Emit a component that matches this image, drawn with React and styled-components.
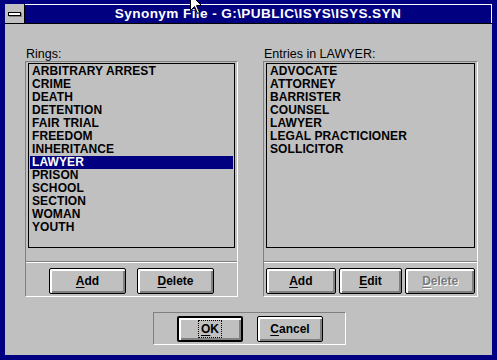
import React from 'react';
import styled, { createGlobalStyle } from 'styled-components';

const GlobalStyle = createGlobalStyle`
  html, body {
    margin: 0;
    padding: 0;
    background: #000080;
  }
  body {
    font-family: "Liberation Sans", Arial, sans-serif;
  }
`;

const rings = [
  'ARBITRARY ARREST',
  'CRIME',
  'DEATH',
  'DETENTION',
  'FAIR TRIAL',
  'FREEDOM',
  'INHERITANCE',
  'LAWYER',
  'PRISON',
  'SCHOOL',
  'SECTION',
  'WOMAN',
  'YOUTH',
];

const entries = [
  'ADVOCATE',
  'ATTORNEY',
  'BARRISTER',
  'COUNSEL',
  'LAWYER',
  'LEGAL PRACTICIONER',
  'SOLLICITOR',
];

const Window = styled.div`
  position: relative;
  width: 497px;
  height: 360px;
  box-sizing: border-box;
  padding: 4px 5px 5px 5px;
  background: #000080;
  display: flex;
  flex-direction: column;
  overflow: hidden;
`;

const TitleBar = styled.div`
  display: flex;
  height: 20px;
  box-sizing: border-box;
  border-bottom: 1px solid #000;
`;

const SysMenu = styled.div`
  width: 20px;
  box-sizing: border-box;
  background: #c0c0c0;
  border-right: 1px solid #000;
  display: flex;
  align-items: center;
  justify-content: center;
`;

const SysBar = styled.div`
  width: 11px;
  height: 2px;
  background: #fff;
  border: 1px solid #000;
  box-shadow: 1px 1px 0 #808080;
  margin-right: 1px;
`;

const Caption = styled.div`
  flex: 1;
  box-sizing: border-box;
  border-top: 1px solid #fff;
  border-right: 1px solid #fff;
  color: #fff;
  font-weight: 700;
  font-size: 13.6px;
  letter-spacing: 0.4px;
  line-height: 18px;
  text-align: center;
  white-space: nowrap;
`;

const Client = styled.div`
  flex: 1;
  background: #c0c0c0;
  padding: 23px 14px 10px 20px;
  display: flex;
  flex-direction: column;
`;

const Columns = styled.div`
  display: grid;
  grid-template-columns: 213px 215px;
  column-gap: 25px;
`;

const Column = styled.div`
  display: flex;
  flex-direction: column;
`;

const Label = styled.div`
  height: 14px;
  line-height: 14px;
  padding-left: 1px;
  font-size: 12.5px;
  color: #000;
  white-space: nowrap;
`;

const Group = styled.div`
  box-sizing: border-box;
  border: 1px solid;
  border-color: #808080 #fff #fff #808080;
`;

const ListGroup = styled(Group)`
  height: 236px;
  padding: 1px 2px 2px 2px;
  display: flex;
  flex-direction: column;
`;

const ListBox = styled.div`
  height: 185px;
  box-sizing: border-box;
  border: 1px solid #000;
  padding: 1px;
`;

const Item = styled.div`
  height: 13px;
  line-height: 13px;
  padding-left: 2px;
  font-size: 12px;
  font-weight: 700;
  letter-spacing: 0.1px;
  white-space: nowrap;
  color: ${({ $selected }) => ($selected ? '#fff' : '#000')};
  background: ${({ $selected }) => ($selected ? '#000080' : 'transparent')};
`;

const Divider = styled.div`
  margin: 13px -2px 0;
  border-top: 1px solid #808080;
  border-bottom: 1px solid #fff;
`;

const ButtonRow = styled.div`
  margin-top: 5px;
  display: flex;
  justify-content: center;
  gap: ${({ $gap }) => $gap}px;
`;

const Button = styled.div`
  width: ${({ $w }) => $w}px;
  height: 26px;
  box-sizing: border-box;
  border: ${({ $default }) => ($default ? 2 : 1)}px solid #000;
  border-radius: 2px;
  background: #c0c0c0;
  box-shadow: inset 2px 2px 0 #fff, inset -2px -2px 0 #808080;
  display: flex;
  align-items: center;
  justify-content: center;
  font-size: 12px;
  font-weight: 700;
  color: ${({ $disabled }) => ($disabled ? '#7a7a7a' : '#000')};
  text-shadow: ${({ $disabled }) => ($disabled ? '1px 1px 0 #fff' : 'none')};
  u {
    text-decoration-thickness: 1px;
    text-underline-offset: 2px;
  }
`;

const Focus = styled.span`
  outline: 1px dotted #000;
  outline-offset: 1px;
  padding: 0 1px;
`;

const BottomGroup = styled(Group)`
  width: 193px;
  margin: 15px 0 0 128px;
  padding: 3px 0 2px 23px;
  display: flex;
  gap: 14px;
`;

const Cursor = styled.svg`
  position: absolute;
  left: 190px;
  top: -6px;
`;

const Btn = ({ children, ...rest }) => (
  <Button {...rest}>
    <span>
      <u>{children[0]}</u>
      {children.slice(1)}
    </span>
  </Button>
);

export default function App() {
  return (
    <>
      <GlobalStyle />
      <Window>
        <TitleBar>
          <SysMenu>
            <SysBar />
          </SysMenu>
          <Caption>Synonym File - G:\PUBLIC\ISYS\ISYS.SYN</Caption>
        </TitleBar>
        <Client>
          <Columns>
            <Column>
              <Label>Rings:</Label>
              <ListGroup>
                <ListBox>
                  {rings.map((r) => (
                    <Item key={r} $selected={r === 'LAWYER'}>{r}</Item>
                  ))}
                </ListBox>
                <Divider />
                <ButtonRow $gap={11}>
                  <Btn $w={77}>Add</Btn>
                  <Btn $w={77}>Delete</Btn>
                </ButtonRow>
              </ListGroup>
            </Column>
            <Column>
              <Label>Entries in LAWYER:</Label>
              <ListGroup>
                <ListBox>
                  {entries.map((e) => (
                    <Item key={e}>{e}</Item>
                  ))}
                </ListBox>
                <Divider />
                <ButtonRow $gap={3}>
                  <Btn $w={70}>Add</Btn>
                  <Btn $w={64}>Edit</Btn>
                  <Btn $w={70} $disabled>Delete</Btn>
                </ButtonRow>
              </ListGroup>
            </Column>
          </Columns>
          <BottomGroup>
            <Button $w={66} $default>
              <Focus><u>O</u>K</Focus>
            </Button>
            <Btn $w={66}>Cancel</Btn>
          </BottomGroup>
        </Client>
        <Cursor width="13" height="21" viewBox="0 0 13 21">
          <path d="M0.5 0.5 L0.5 16.5 L4.5 12.5 L7.5 19.5 L9.5 18.5 L6.5 11.5 L11.5 11.5 Z" fill="#fff" stroke="#000" strokeWidth="1" />
        </Cursor>
      </Window>
    </>
  );
}
